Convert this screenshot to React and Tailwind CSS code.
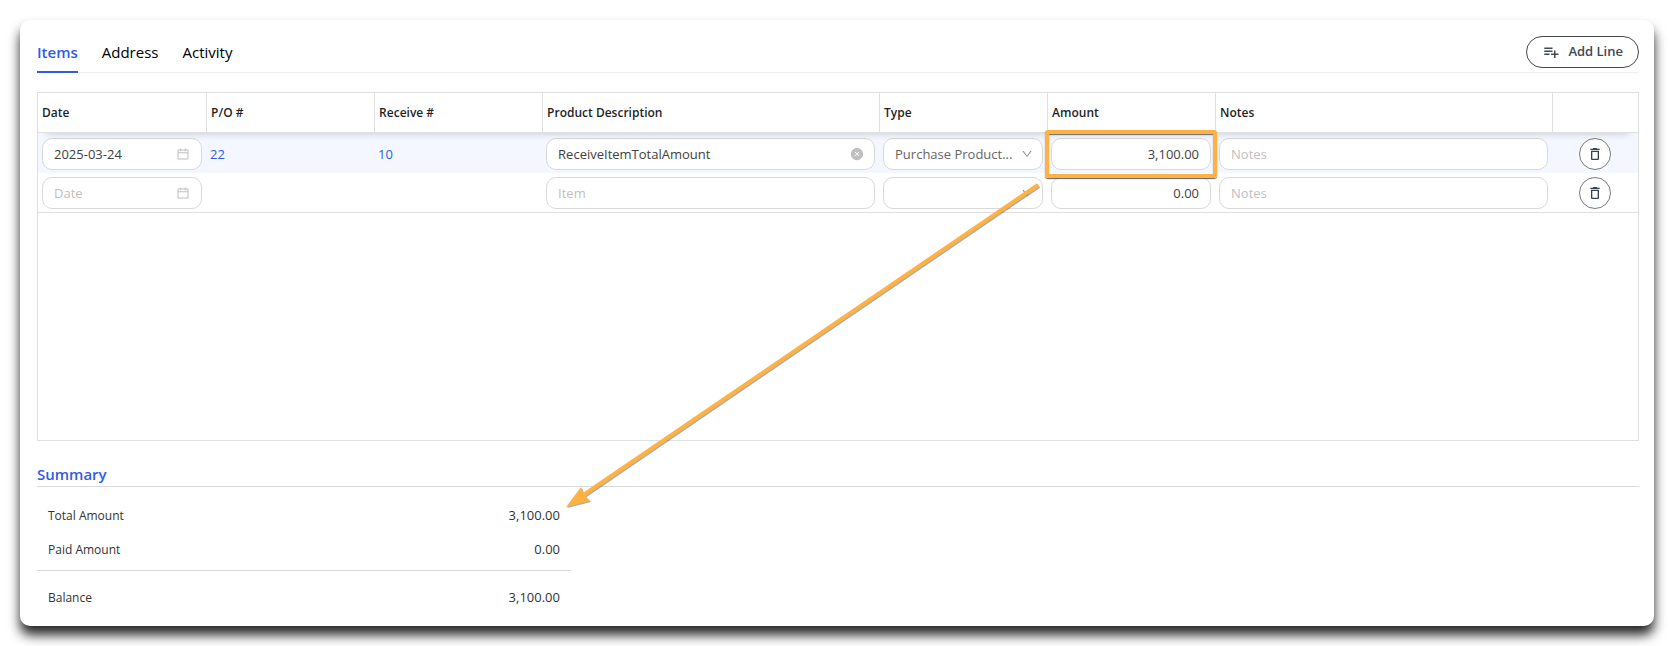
import React, { useState } from 'react';
import { AiOutlineCalendar, AiOutlineDown, AiFillCloseCircle } from 'react-icons/ai';
import { MdDeleteOutline, MdPlaylistAdd } from 'react-icons/md';

const TABS = ['Items', 'Address', 'Activity'];

const COLUMNS = [
  { label: 'Date', width: '' },
  { label: 'P/O #', width: 'w-[10.5%]' },
  { label: 'Receive #', width: 'w-[10.5%]' },
  { label: 'Product Description', width: 'w-[21.06%]' },
  { label: 'Type', width: 'w-[10.5%]' },
  { label: 'Amount', width: 'w-[10.5%]' },
  { label: 'Notes', width: 'w-[21.06%]' },
  { label: '', width: 'w-[85px]' }
];

const LINES = [
  { id: 1, date: '2025-03-24', po: '22', receive: '10', item: 'ReceiveItemTotalAmount', type: 'Purchase Product...', amount: '3,100.00', active: true },
  { id: 2, date: '', po: '', receive: '', item: '', type: '', amount: '0.00', active: false }
];

const FIELD = 'block w-full h-8 rounded-[10px] border border-[#d9d9d9] bg-white px-[11px] text-[13px] placeholder:text-[#bfbfbf] outline-none';

function LineRow({ line }) {
  const cell = line.active ? 'pt-[5px] pb-[3px] bg-[#f4f7ff]' : 'pt-1 pb-[3px] border-b border-[#e0e0e0]';

  return (
    <tr>
      <td className={`${cell} pl-1 pr-[5px]`}>
        <div className="relative">
          <input className={`${FIELD} text-[#404040]`} aria-label="Date" placeholder="Date" defaultValue={line.date} />
          <AiOutlineCalendar className="absolute right-3 top-[9px] w-[14px] h-[14px] text-[#bfbfbf]" />
        </div>
      </td>
      <td className={`${cell} pl-[3px]`}>
        {line.po && <a href="#po" className="block text-[13px] leading-8 text-[#2f5bea]">{line.po}</a>}
      </td>
      <td className={`${cell} pl-[3px]`}>
        {line.receive && <a href="#receive" className="block text-[13px] leading-8 text-[#2f5bea]">{line.receive}</a>}
      </td>
      <td className={`${cell} pl-[3px] pr-[5px]`}>
        <div className="relative">
          <input className={`${FIELD} text-[#404040]`} aria-label="Item" placeholder="Item" defaultValue={line.item} />
          {line.item && (
            <button type="button" aria-label="Clear item" className="absolute right-[11px] top-[9px] text-[#bfbfbf]">
              <AiFillCloseCircle className="w-[14px] h-[14px]" />
            </button>
          )}
        </div>
      </td>
      <td className={`${cell} pl-[3px] pr-[5px]`}>
        <div className="relative">
          <select className={`${FIELD} pt-px appearance-none text-[#666666]`} aria-label="Type" defaultValue={line.type}>
            <option value={line.type}>{line.type}</option>
          </select>
          <AiOutlineDown className="absolute right-[10px] top-[10px] w-3 h-3 text-[#8c8c8c] pointer-events-none" />
        </div>
      </td>
      <td className={`${cell} pl-[3px] pr-[5px]`}>
        <div className="relative">
          <input className={`${FIELD} text-right text-[#404040]`} aria-label="Amount" defaultValue={line.amount} />
          {line.active && (
            <div className="absolute z-20 -left-[6px] -right-[6px] -top-2 -bottom-2 rounded-[3px] border-4 border-[#ffb142] shadow-[0_1px_1px_rgba(60,60,60,0.8),inset_0_1px_1px_rgba(60,60,60,0.7)] pointer-events-none" />
          )}
        </div>
      </td>
      <td className={`${cell} pl-[3px] pr-[5px]`}>
        <input className={`${FIELD} text-[#404040]`} aria-label="Notes" placeholder="Notes" />
      </td>
      <td className={`${cell} pr-px`}>
        <button type="button" aria-label="Delete line" className="mx-auto flex w-8 h-8 items-center justify-center rounded-full border border-[#7a7a7a] bg-white text-[#3b414a]">
          <MdDeleteOutline className="w-4 h-4" />
        </button>
      </td>
    </tr>
  );
}

function SummaryRow({ label, value }) {
  return (
    <div className="flex h-[34px] items-center justify-between px-[11px]">
      <dt className="text-xs">{label}</dt>
      <dd className="text-[13px]">{value}</dd>
    </div>
  );
}

export default function App() {
  const [activeTab, setActiveTab] = useState('Items');

  return (
    <div className="relative bg-white p-5 text-[#333333] font-['Open_Sans','Noto_Sans',sans-serif]">
      <main className="rounded-[10px] bg-white pl-[17px] pr-[15px] pt-4 pb-[11px] shadow-[0_9px_12px_rgba(0,0,0,0.85)]">
        <header className="flex h-[37px] items-start justify-between border-b border-[#f0f0f0]">
          <nav className="flex gap-6">
            {TABS.map(tab => (
              <button
                type="button"
                key={tab}
                onClick={() => setActiveTab(tab)}
                className={`h-[37px] pb-[3px] text-[15px] border-b-2 ${activeTab === tab ? 'border-[#2f5bea] text-[#2f5bea] font-semibold' : 'border-transparent text-black'}`}
              >
                {tab}
              </button>
            ))}
          </nav>
          <button type="button" className="flex h-8 items-center gap-2 rounded-full border border-[#434851] px-[15px] text-[13px] font-semibold text-[#434851]">
            <MdPlaylistAdd className="w-[18px] h-[18px]" />
            Add Line
          </button>
        </header>

        <div className="mt-[19px] min-h-[349px] border border-[#e0e0e0]">
          <table className="w-full table-fixed border-separate border-spacing-0">
            <thead className="relative z-10 shadow-[0_8px_8px_-8px_rgba(0,0,0,0.2)]">
              <tr>
                {COLUMNS.map((col, i) => (
                  <th key={i} className={`${col.width} h-10 bg-white border-b border-[#e0e0e0] pl-1 text-left text-xs font-semibold text-[#1f1f1f] not-last:border-r`}>
                    {col.label}
                  </th>
                ))}
              </tr>
            </thead>
            <tbody>
              {LINES.map(line => <LineRow key={line.id} line={line} />)}
            </tbody>
          </table>
        </div>

        <section>
          <h2 className="mt-[22px] h-6 border-b border-[#d9d9d9] text-[15px] leading-[22px] font-semibold text-[#2f5bea]">Summary</h2>
          <dl className="w-[534px] pt-3">
            <SummaryRow label="Total Amount" value="3,100.00" />
            <SummaryRow label="Paid Amount" value="0.00" />
            <div className="mt-[3px] border-t border-[#d9d9d9] pt-[10px]">
              <SummaryRow label="Balance" value="3,100.00" />
            </div>
          </dl>
        </section>
      </main>

      {/* pointer from the amount cell to the total */}
      <svg className="absolute left-0 top-0 z-20 pointer-events-none drop-shadow-[1px_1px_0px_rgba(70,70,70,0.45)]" width="1100" height="560" viewBox="0 0 1100 560" fill="none">
        <path d="M1038 185 L582 496" stroke="#ffb142" strokeWidth="4" />
        <path d="M566 507 L581 487 L584 495 L590 501 Z" fill="#ffb142" />
      </svg>
    </div>
  );
}
